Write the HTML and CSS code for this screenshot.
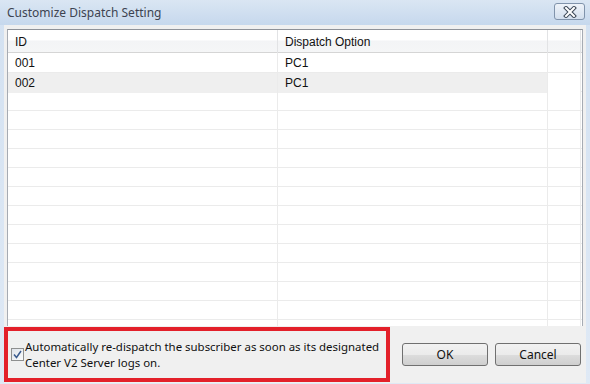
FILE: index.html
```html
<!DOCTYPE html>
<html lang="en">
<head>
    <meta charset="UTF-8">
    <title>Customize Dispatch Setting</title>
    <link rel="stylesheet" href="styles.css">
</head>
<body>
    <div class="window">
        <div class="titlebar">
            <span class="title">Customize Dispatch Setting</span>
            <button class="close" title="Close">
                <svg width="18" height="12" viewBox="0 0 18 12">
                    <path d="M5 2 L13 10 M13 2 L5 10" stroke="#3b4757" stroke-width="4" stroke-linecap="square"/>
                    <path d="M5 2 L13 10 M13 2 L5 10" stroke="#ffffff" stroke-width="2" stroke-linecap="square"/>
                </svg>
            </button>
        </div>
        <div class="client">
            <div class="grid">
                <div class="row header">
                    <div class="cell">ID</div>
                    <div class="cell">Dispatch Option</div>
                    <div class="cell filler"></div>
                </div>
                <div class="row">
                    <div class="cell">001</div>
                    <div class="cell">PC1</div>
                    <div class="cell filler"></div>
                </div>
                <div class="row alt">
                    <div class="cell">002</div>
                    <div class="cell">PC1</div>
                    <div class="cell filler"></div>
                </div>
                <div class="row"><div class="cell"></div><div class="cell"></div><div class="cell filler"></div></div>
                <div class="row"><div class="cell"></div><div class="cell"></div><div class="cell filler"></div></div>
                <div class="row"><div class="cell"></div><div class="cell"></div><div class="cell filler"></div></div>
                <div class="row"><div class="cell"></div><div class="cell"></div><div class="cell filler"></div></div>
                <div class="row"><div class="cell"></div><div class="cell"></div><div class="cell filler"></div></div>
                <div class="row"><div class="cell"></div><div class="cell"></div><div class="cell filler"></div></div>
                <div class="row"><div class="cell"></div><div class="cell"></div><div class="cell filler"></div></div>
                <div class="row"><div class="cell"></div><div class="cell"></div><div class="cell filler"></div></div>
                <div class="row"><div class="cell"></div><div class="cell"></div><div class="cell filler"></div></div>
                <div class="row"><div class="cell"></div><div class="cell"></div><div class="cell filler"></div></div>
                <div class="row"><div class="cell"></div><div class="cell"></div><div class="cell filler"></div></div>
                <div class="row"><div class="cell"></div><div class="cell"></div><div class="cell filler"></div></div>
                <div class="row"><div class="cell"></div><div class="cell"></div><div class="cell filler"></div></div>
            </div>
            <div class="footer">
                <label class="redispatch">
                    <span class="checkbox">
                        <svg width="9" height="9" viewBox="0 0 9 9">
                            <path d="M1 4.5 L3.5 7.5 L8 1" fill="none" stroke="#3a5a8f" stroke-width="1.5"/>
                        </svg>
                    </span>
                    <span class="redispatch-text">Automatically re-dispatch the subscriber as soon as its designated Center V2 Server logs on.</span>
                </label>
                <div class="buttons">
                    <button class="btn">OK</button>
                    <button class="btn">Cancel</button>
                </div>
            </div>
        </div>
    </div>
</body>
</html>
```

FILE: styles.css
```css
body {
    margin: 0;
    background-color: #ffffff;
    font-family: "Noto Sans", "Open Sans", sans-serif;
}
.window {
    width: 590px;
    height: 384px;
    display: flex;
    flex-direction: column;
    background: linear-gradient(to bottom, #d3e1f1, #dfe9f5);
    box-sizing: border-box;
    overflow: hidden;
}
.titlebar {
    height: 25px;
    display: flex;
    align-items: center;
    justify-content: space-between;
    padding: 0 5px 0 7px;
    background: linear-gradient(to bottom, #dae6f3, #c6d8ed);
    flex-shrink: 0;
}
.title {
    font-size: 12px;
    color: #3d4350;
    margin-top: -1px;
}
.close {
    width: 31px;
    height: 17px;
    margin-top: -2px;
    padding: 0;
    border: 1px solid #8093ab;
    border-radius: 3px;
    background: linear-gradient(to bottom, #eef3f9, #d3dfee);
    display: flex;
    align-items: center;
    justify-content: center;
}
.client {
    flex: 1;
    margin: 0 4px 1px 4px;
    background-color: #f0f0f0;
    display: flex;
    flex-direction: column;
}
.grid {
    margin: 4px 3px 0 3px;
    height: 297px;
    box-sizing: border-box;
    border: 1px solid #a6abb3;
    border-top-color: #8e9299;
    border-bottom: none;
    background-color: #ffffff;
    overflow: hidden;
    font-family: "Liberation Sans", Arial, sans-serif;
    font-size: 12px;
    color: #111111;
}
.row {
    display: grid;
    grid-template-columns: 270px 270px 1fr;
    height: 19px;
    box-sizing: border-box;
    border-top: 1px solid #ebebeb;
}
.row .cell {
    border-right: 1px solid #ebebeb;
    padding-left: 7px;
    line-height: 20px;
}
.row .filler {
    margin-right: 1px;
}
.header {
    height: 23px;
    border-top: none;
    border-bottom: 1px solid #d5d5d5;
    background: linear-gradient(to bottom, #ffffff 45%, #f3f4f6 50%, #f5f6f7);
}
.header .cell {
    line-height: 24px;
    border-right-color: #e2e3e5;
}
.header + .row {
    border-top: none;
    height: 19px;
}
.alt .cell {
    background-color: #efefef;
}
.alt .filler {
    background-color: #ffffff;
}
.footer {
    flex: 1;
    display: flex;
    align-items: flex-start;
    justify-content: space-between;
    padding-right: 5px;
}
.redispatch {
    width: 386px;
    height: 55px;
    margin-top: 1px;
    box-sizing: border-box;
    border: 4px solid #e3202a;
    display: flex;
    align-items: center;
    padding-left: 3px;
    font-size: 11.45px;
    color: #111111;
    line-height: 16px;
}
.checkbox {
    width: 11px;
    height: 11px;
    border: 1px solid #8e8f8f;
    background: linear-gradient(135deg, #dfe3ea, #fafbfc);
    display: flex;
    align-items: center;
    justify-content: center;
    margin-right: 1px;
    flex-shrink: 0;
}
.redispatch-text {
    width: 362px;
}
.buttons {
    display: flex;
    gap: 7px;
    margin-top: 17px;
}
.btn {
    width: 86px;
    height: 23px;
    padding: 0;
    border: 1px solid #707070;
    border-radius: 3px;
    background: linear-gradient(to bottom, #f2f2f2 0%, #ebebeb 50%, #dddddd 51%, #cfcfcf 100%);
    font-family: "Noto Sans", "Open Sans", sans-serif;
    font-size: 12px;
    color: #111111;
}
```
